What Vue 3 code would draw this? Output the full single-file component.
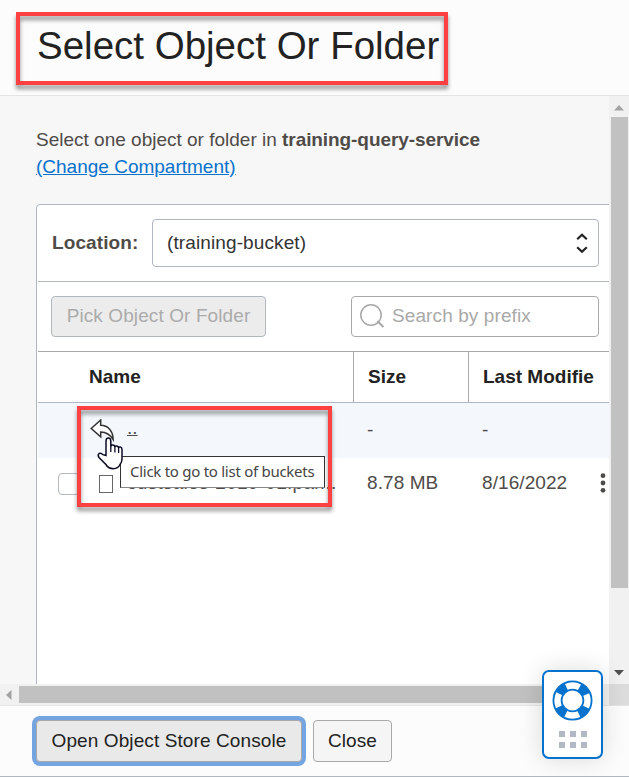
<script setup>
const columns = ['Name', 'Size', 'Last Modifie']
const dots = [0, 1, 2, 3, 4, 5]
</script>

<template>
  <div class="dialog">
    <header class="head"><h1>Select Object Or Folder</h1></header>
    <div class="middle">
      <main class="content">
        <p class="intro">
          <span class="lead">Select one object or folder in </span><b>training-query-service</b><br />
          <a class="change">(Change Compartment)</a>
        </p>
        <section class="panel">
          <div class="location">
            <label>Location:</label>
            <div class="select">
              <span>(training-bucket)</span>
              <svg width="12" height="22" viewBox="0 0 12 22"><path d="M1.2 7.3 6 2.7l4.8 4.6M1.2 15.2 6 19.8l4.8-4.6" fill="none" stroke="#222" stroke-width="2.2" /></svg>
            </div>
          </div>
          <div class="tools">
            <button class="pick" disabled>Pick Object Or Folder</button>
            <div class="search">
              <svg width="25" height="25" viewBox="0 0 25 25"><g fill="none" stroke="#a8a8a8" stroke-width="1.5"><circle cx="11" cy="11" r="10.2" /><path d="m17.4 17 6 6" stroke-width="2" /></g></svg>
              <span>Search by prefix</span>
            </div>
          </div>
          <div class="row thead">
            <div v-for="c in columns" :key="c" class="cell"><span>{{ c }}</span></div>
          </div>
          <div class="row up">
            <div class="name">
              <svg class="back" width="26" height="24" viewBox="0 0 26 24"><path d="M1.2 9.5 10.7 1v5.2C18 6.2 23 12 23.2 20.5 19.8 15 16.5 13.2 10.7 13v4.8Z" fill="#fff" stroke="#333" stroke-width="1.5" /></svg>
              <a>..</a>
            </div>
            <div>-</div><div>-</div>
          </div>
          <div class="row file">
            <div class="name"><i class="check"></i><i class="doc"></i><span>custsales-2019-01.par...</span></div>
            <div>8.78 MB</div>
            <div class="date"><span>8/16/2022</span><svg width="6" height="20" viewBox="0 0 6 20"><g fill="#4f4b48"><circle cx="3" cy="2.7" r="2.4" /><circle cx="3" cy="10" r="2.4" /><circle cx="3" cy="17.3" r="2.4" /></g></svg></div>
          </div>
        </section>
      </main>
      <div class="vbar">
        <svg width="10" height="6"><path d="M0 5.5 5 0l5 5.5Z" fill="#a3a3a3" /></svg>
        <i></i>
        <svg width="10" height="6"><path d="M0 0h10L5 5.5Z" fill="#505050" /></svg>
      </div>
      <div class="hbar">
        <svg width="6" height="10"><path d="M5.500 0v10L0 5Z" fill="#a3a3a3" /></svg>
        <i></i>
      </div>
      <div class="corner"></div>
    </div>
    <footer class="foot">
      <button class="console">Open Object Store Console</button>
      <button class="close">Close</button>
    </footer>

    <div class="tooltip">Click to go to list of buckets</div>
    <svg class="pointer" width="26" height="33" viewBox="0 0 26 33"><path d="M9 18.500V4.200Q9 1 11.400 1t2.400 3.200V9.500q.2-1.500 2-1.400 2 .1 2.100 2 0-1.300 1.800-1.200 1.900.2 1.900 2 .2-1 1.700-.8 1.700.3 1.700 2.300V22q0 3-2 5.500-2 4.200-6.600 4.200-5 0-7.500-4.200L2 20.500q-1.700-2.700.2-4 1.700-1 3.800 1.200Z" fill="#fff" stroke="#0b0b24" stroke-width="1.500" /><path d="M13.800 9v6M17.900 10v5.500M21.600 11v5" stroke="#0b0b24" stroke-width="1.300" /></svg>
    <div class="mark title-mark"></div>
    <div class="mark row-mark"></div>

    <aside class="help">
      <svg width="43" height="43" viewBox="-21.5 -21.5 43 43">
        <circle r="15" fill="none" stroke="#0572ce" stroke-width="10" />
        <circle r="15" fill="none" stroke="#fff" stroke-width="6.400" stroke-dasharray="13.560 10" stroke-dashoffset="6.780" />
      </svg>
      <div class="grip"><i v-for="d in dots" :key="d"></i></div>
    </aside>
  </div>
</template>

<style>
body { margin: 0; overflow: hidden; }
</style>

<style scoped>
* { box-sizing: border-box; }
.dialog { position: relative; width: 629px; height: 777px; display: flex; flex-direction: column; background: #fcfcfc; border-bottom: 1px solid #b0b7bf; font-family: "Liberation Sans", Arial, sans-serif; font-size: 19px; color: #4f4b48; overflow: hidden; }
.head { height: 96px; flex: none; border-bottom: 1px solid #e5e5e5; padding: 23px 0 0 37px; }
h1 { margin: 0; font-size: 38.5px; line-height: 45px; font-weight: 400; color: #222; white-space: nowrap; }
.middle { height: 610px; flex: none; display: grid; grid-template: 588px 22px / 609px 20px; }
.content { background: #f7f7f7; padding: 30px 0 0 36px; overflow: hidden; }
.intro { margin: 0 0 24px; line-height: 27px; white-space: nowrap; }
.intro b { letter-spacing: -.08px; }
.change { color: #0572ce; text-decoration: underline; }
.panel { background: #fff; width: 700px; height: 700px; border: 1px solid #aeb6c0; border-radius: 4px; padding-left: 1px; }
.location { width: 571px; height: 77px; border-bottom: 1px solid #aeb6c0; display: flex; align-items: center; justify-content: space-between; padding: 0 10px 0 14px; }
label { font-weight: 700; letter-spacing: .1px; }
.select { width: 447px; height: 48px; border: 1px solid #aeb6c0; border-radius: 4px; display: flex; align-items: center; justify-content: space-between; padding: 0 10px 0 14px; color: #333; letter-spacing: .11px; }
.tools { width: 571px; height: 70px; border-bottom: 1px solid #a9a9a9; display: flex; align-items: center; justify-content: space-between; padding: 0 10px 0 13px; }
button { font: inherit; padding: 0; border-radius: 4px; white-space: nowrap; letter-spacing: .1px; }
.pick { width: 215px; height: 41px; border: 1px solid #b0b7bf; background: #ececec; color: #ababab; padding-bottom: 2px; }
.search { width: 248px; height: 41px; border: 1px solid #a9a9a9; border-radius: 4px; display: flex; align-items: center; gap: 7px; padding-left: 8px; color: #a9a9a9; letter-spacing: .1px; }
.search span { padding-bottom: 2px; }
.row { width: 571px; display: grid; grid-template-columns: 314px 115px 142px; align-items: center; white-space: nowrap; }
.thead { height: 51px; border-bottom: 1px solid #aeb6c0; font-weight: 700; color: #222; }
.cell { height: 50px; display: flex; align-items: center; padding-left: 16px; }
.cell:first-child { padding-left: 51px; }
.cell + .cell { border-left: 1px solid #a9a9a9; padding-left: 14px; margin-left: 1px; }
.row > div:not(.cell):not(.name) { padding-left: 15px; letter-spacing: .08px; }
.up { height: 55px; background: #f4f8fd; }
.up > div:not(.name) { padding-bottom: 2px; }
.up .name { display: flex; align-items: center; gap: 11px; padding-left: 52px; }
.up a { text-decoration: underline; padding-bottom: 5px; }
.file { height: 51px; }
.file > div:not(.name), .file .name span { padding-bottom: 2px; }
.file .name { display: flex; align-items: center; padding-left: 20px; letter-spacing: .28px; }
.check { width: 22px; height: 22px; border: 1px solid #b3b8bf; border-radius: 4px; margin-right: 19px; }
.doc { width: 14px; height: 18px; border: 1px solid #666; margin-right: 14px; }
.date { display: flex; justify-content: space-between; align-items: center; padding-right: 3px; }
.vbar { background: #f1f1f1; display: flex; flex-direction: column; align-items: center; padding: 9px 0 8px; }
.vbar i { width: 17px; height: 471px; background: #c1c1c1; margin: 6px 0 auto 1px; }
.hbar { background: #f1f1f1; border-bottom: 1px solid #e5e5e5; display: flex; align-items: center; padding-left: 6px; }
.hbar i { width: 535px; height: 17px; background: #c1c1c1; margin-left: 7px; }
.corner { background: #dcdcdc; border-bottom: 1px solid #e5e5e5; }
.foot { flex: 1; display: flex; gap: 11px; padding: 14px 0 0 36px; }
.foot button { height: 42px; border: 1px solid #a9a9a9; color: #222; padding-bottom: 1px; }
.console { width: 266px; background: #e9e9e9; box-shadow: 0 0 0 4px #74a5e0; }
.close { width: 79px; background: #f5f5f5; }
.tooltip { position: absolute; left: 120px; top: 456px; width: 205px; height: 32px; background: #fff; border: 1px solid #333; border-bottom-color: #888; padding-left: 9px; font: 15px/29px "Noto Sans", sans-serif; letter-spacing: -.27px; color: #444; white-space: nowrap; }
.pointer { position: absolute; left: 97px; top: 437px; }
.mark { position: absolute; border: 4px solid #fd4141; filter: drop-shadow(0 4px 2px rgba(0,0,0,.42)); }
.title-mark { left: 16px; top: 12px; width: 432px; height: 73px; }
.row-mark { left: 77px; top: 406px; width: 255px; height: 101px; }
.help { position: absolute; left: 542px; top: 670px; width: 61px; height: 89px; border: 2px solid #0572ce; border-radius: 7px; background: #fff; box-shadow: 0 0 24px rgba(0,0,0,.14); display: flex; flex-direction: column; align-items: center; padding-top: 7px; }
.help svg { flex: none; }
.grip { display: grid; grid-template-columns: repeat(3, 6px); gap: 5px; margin-top: 9px; }
.grip i { height: 6px; background: #b3b9c4; }
</style>
